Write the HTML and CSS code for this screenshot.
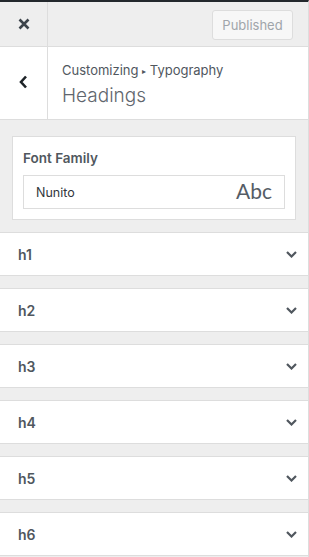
FILE: index.html
```html
<!DOCTYPE html>
<html lang="en">
<head>
    <meta charset="UTF-8">
    <meta name="viewport" content="width=device-width, initial-scale=1.0">
    <title>Customizer - Headings</title>
    <link rel="stylesheet" href="styles.css">
</head>
<body>

<div class="panel">
    <div class="topbar">
        <div class="close">
            <svg width="12" height="12" viewBox="0 0 12 12">
                <path d="M1.5 1.5 L10.5 10.5 M10.5 1.5 L1.5 10.5" stroke="#3c434a" stroke-width="2.6" fill="none"/>
            </svg>
        </div>
        <div class="publish-wrap">
            <button class="publish" disabled>Published</button>
        </div>
    </div>

    <div class="section-head">
        <div class="back">
            <svg width="9" height="14" viewBox="0 0 9 14">
                <path d="M7 1.5 L2 7 L7 12.5" stroke="#1d2327" stroke-width="2.6" fill="none"/>
            </svg>
        </div>
        <div class="titles">
            <div class="crumb">Customizing <span class="arrow">▸</span> Typography</div>
            <div class="title">Headings</div>
        </div>
    </div>

    <div class="content">
        <div class="card">
            <div class="card-label">Font Family</div>
            <div class="font-input">
                <span class="font-name">Nunito</span>
                <span class="font-preview">Abc</span>
            </div>
        </div>

        <div class="row"><span>h1</span><svg class="chev" width="11" height="7" viewBox="0 0 11 7"><path d="M1 1 L5.5 5.5 L10 1" stroke="#50575e" stroke-width="2.2" fill="none"/></svg></div>
        <div class="row"><span>h2</span><svg class="chev" width="11" height="7" viewBox="0 0 11 7"><path d="M1 1 L5.5 5.5 L10 1" stroke="#50575e" stroke-width="2.2" fill="none"/></svg></div>
        <div class="row"><span>h3</span><svg class="chev" width="11" height="7" viewBox="0 0 11 7"><path d="M1 1 L5.5 5.5 L10 1" stroke="#50575e" stroke-width="2.2" fill="none"/></svg></div>
        <div class="row"><span>h4</span><svg class="chev" width="11" height="7" viewBox="0 0 11 7"><path d="M1 1 L5.5 5.5 L10 1" stroke="#50575e" stroke-width="2.2" fill="none"/></svg></div>
        <div class="row"><span>h5</span><svg class="chev" width="11" height="7" viewBox="0 0 11 7"><path d="M1 1 L5.5 5.5 L10 1" stroke="#50575e" stroke-width="2.2" fill="none"/></svg></div>
        <div class="row"><span>h6</span><svg class="chev" width="11" height="7" viewBox="0 0 11 7"><path d="M1 1 L5.5 5.5 L10 1" stroke="#50575e" stroke-width="2.2" fill="none"/></svg></div>
    </div>
</div>

</body>
</html>
```

FILE: styles.css
```css
* {
    margin: 0;
    padding: 0;
    box-sizing: border-box;
}

body {
    font-family: 'Inter', 'Noto Sans', sans-serif;
    background-color: #eeeeee;
    color: #555d66;
    height: 557px;
    overflow: hidden;
}

.panel {
    width: 309px;
    height: 557px;
    background-color: #eeeeee;
    border-top: 2px solid #23282d;
    border-right: 1px solid #dddddd;
}

/* top bar */
.topbar {
    display: flex;
    height: 45px;
    border-bottom: 1px solid #dddddd;
}

.close {
    width: 48px;
    border-right: 1px solid #dddddd;
    display: flex;
    align-items: center;
    justify-content: center;
}

.publish-wrap {
    flex: 1;
    display: flex;
    justify-content: flex-end;
    align-items: flex-start;
    padding: 8px 15px 0 0;
}

.publish {
    width: 81px;
    height: 30px;
    background-color: #f7f7f7;
    border: 1px solid #dddddd;
    border-radius: 3px;
    color: #a0a5aa;
    font-family: inherit;
    font-size: 13px;
}

/* section header */
.section-head {
    display: flex;
    height: 73px;
    background-color: #ffffff;
    border-bottom: 1px solid #dddddd;
}

.back {
    width: 48px;
    border-right: 1px solid #dddddd;
    display: flex;
    align-items: center;
    justify-content: center;
    padding-bottom: 2px;
}

.titles {
    padding: 14px 0 0 14px;
}

.crumb {
    font-size: 13px;
    color: #50575e;
    line-height: 18px;
}

.crumb .arrow {
    font-size: 8px;
    vertical-align: 1px;
}

.title {
    font-size: 19px;
    font-weight: 300;
    color: #5f666d;
    line-height: 26px;
    margin-top: 3px;
}

/* content */
.content {
    padding: 16px 0 0 0;
}

.card {
    margin: 0 12px 12px 12px;
    background-color: #ffffff;
    border: 1px solid #dddddd;
    padding: 12px 10px 10px 10px;
}

.card-label {
    font-size: 13.5px;
    font-weight: 600;
    color: #50575e;
    line-height: 18px;
    margin-bottom: 8px;
}

.font-input {
    display: flex;
    justify-content: space-between;
    align-items: center;
    height: 34px;
    border: 1px solid #dddddd;
    padding: 0 12px 0 12px;
}

.font-name {
    font-size: 12.5px;
    color: #32373c;
}

.font-preview {
    font-family: 'Lato', 'Noto Sans', sans-serif;
    font-size: 21px;
    color: #555d66;
    margin-top: -3px;
}

.row {
    display: flex;
    justify-content: space-between;
    align-items: center;
    height: 44px;
    background-color: #ffffff;
    border-top: 1px solid #dddddd;
    border-bottom: 1px solid #dddddd;
    margin-bottom: 12px;
    padding: 0 11px 0 18px;
    font-size: 14px;
    font-weight: 600;
    color: #50575e;
}
```
